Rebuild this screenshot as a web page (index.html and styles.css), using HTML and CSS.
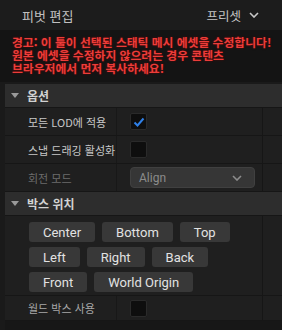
FILE: index.html
```html
<!DOCTYPE html>
<html lang="ko">
<head>
    <meta charset="UTF-8">
    <title>피벗 편집</title>
    <link rel="stylesheet" href="styles.css">
</head>
<body>

    <div class="titlebar">
        <span class="title">피벗 편집</span>
        <span class="preset">프리셋
            <svg class="chevron" width="10" height="6" viewBox="0 0 10 6"><path d="M1 1l4 4 4-4" fill="none" stroke="#c8c8c8" stroke-width="1.6"/></svg>
        </span>
    </div>

    <div class="warning">
        <div>경고: 이 툴이 선택된 스태틱 메시 에셋을 수정합니다!</div>
        <div>원본 에셋을 수정하지 않으려는 경우 콘텐츠</div>
        <div>브라우저에서 먼저 복사하세요!</div>
    </div>

    <div class="details">
        <!-- 옵션 -->
        <div class="section-header"><span class="arrow"></span>옵션</div>

        <div class="row">
            <div class="label">모든 LOD에 적용</div>
            <div class="value"><span class="checkbox checked">
                <svg width="12" height="10" viewBox="0 0 12 10"><path d="M1.5 5.5l3 3 6-7" fill="none" stroke="#2f80e8" stroke-width="2"/></svg>
            </span></div>
            <div class="reset"></div>
        </div>
        <div class="row">
            <div class="label">스냅 드래깅 활성화</div>
            <div class="value"><span class="checkbox"></span></div>
            <div class="reset"></div>
        </div>
        <div class="row">
            <div class="label disabled">회전 모드</div>
            <div class="value">
                <div class="combo">Align
                    <svg width="10" height="6" viewBox="0 0 10 6"><path d="M1 1l4 4 4-4" fill="none" stroke="#8c8c8c" stroke-width="1.6"/></svg>
                </div>
            </div>
            <div class="reset"></div>
        </div>

        <!-- 박스 위치 -->
        <div class="section-header"><span class="arrow"></span>박스 위치</div>

        <div class="button-area">
            <div class="buttons">
                <div class="button-row">
                    <button>Center</button>
                    <button>Bottom</button>
                    <button>Top</button>
                </div>
                <div class="button-row">
                    <button>Left</button>
                    <button>Right</button>
                    <button>Back</button>
                </div>
                <div class="button-row">
                    <button>Front</button>
                    <button>World Origin</button>
                </div>
            </div>
            <div class="reset"></div>
        </div>

        <div class="row last">
            <div class="label dim">월드 박스 사용</div>
            <div class="value"><span class="checkbox"></span></div>
            <div class="reset"></div>
        </div>

        <div class="filler"></div>
    </div>

</body>
</html>
```

FILE: styles.css
```css
body {
    margin: 0;
    width: 282px;
    height: 330px;
    overflow: hidden;
    background-color: #161616;
    font-family: 'Noto Sans CJK KR', 'Roboto', sans-serif;
    font-size: 12px;
    color: #c8c8c8;
}

/* Title bar */
.titlebar {
    height: 30px;
    padding: 0 23px 0 22px;
    display: flex;
    align-items: center;
    justify-content: space-between;
    background-color: #1c1c1c;
}

.title {
    font-size: 13px;
    color: #c0c0c0;
}

.preset {
    display: flex;
    align-items: center;
    gap: 8px;
    font-size: 12.5px;
    color: #c4c4c4;
}

/* Warning text */
.warning {
    height: 52px;
    box-sizing: border-box;
    padding: 5px 8px 0 12px;
    background-color: #141414;
    color: #ec3d3a;
    font-size: 11.8px;
    font-weight: bold;
    white-space: nowrap;
    text-shadow: 0 0 2px rgba(120, 0, 0, 0.9);
}

.warning div {
    height: 13px;
    line-height: 13px;
}

/* Details panel */
.details {
    padding-left: 5px;
    padding-top: 2px;
    background-color: #1a1a1a;
}

.section-header {
    height: 23px;
    display: flex;
    align-items: center;
    padding-left: 6px;
    background-color: #2d2d2d;
    font-weight: bold;
    color: #d2d2d2;
    border-bottom: 1px solid #161616;
}

.arrow {
    width: 0;
    height: 0;
    border-left: 4px solid transparent;
    border-right: 4px solid transparent;
    border-top: 5px solid #9a9a9a;
    margin-right: 8px;
}

.row {
    height: 27px;
    display: grid;
    grid-template-columns: 112px 145px 20px;
    background-color: #1f1f1f;
    border-bottom: 1px solid #161616;
}

.row > div {
    display: flex;
    align-items: center;
}

.label {
    padding-left: 23px;
    font-size: 11px;
    white-space: nowrap;
    border-right: 1px solid #181818;
}

.label.disabled {
    color: #6c6c6c;
}

.label.dim {
    color: #a8a8a8;
}

.value {
    padding-left: 13px;
}

.reset {
    border-left: 1px solid #161616;
}

.checkbox {
    width: 15px;
    height: 15px;
    border: 1px solid #2a2a2a;
    border-radius: 2px;
    background-color: #0e0e0e;
    display: flex;
    align-items: center;
    justify-content: center;
}

.combo {
    width: 125px;
    height: 21px;
    box-sizing: border-box;
    padding: 0 12px 0 8px;
    display: flex;
    align-items: center;
    justify-content: space-between;
    background-color: #363636;
    border: 1px solid #404040;
    border-radius: 4px;
    font-family: 'Roboto', sans-serif;
    color: #8c8c8c;
}

/* Box position buttons */
.button-area {
    display: grid;
    grid-template-columns: 257px 20px;
    background-color: #1f1f1f;
    border-bottom: 1px solid #161616;
}

.buttons {
    padding: 6px 0 3px 24px;
    display: flex;
    flex-direction: column;
    gap: 5px;
}

.button-row {
    display: flex;
    gap: 7px;
}

button {
    height: 20px;
    padding: 0 14px;
    border: none;
    border-radius: 3px;
    background-color: #383838;
    color: #e2e2e2;
    font-family: 'Roboto', sans-serif;
    font-size: 13px;
}

.row.last {
    height: 24px;
}

.filler {
    height: 20px;
    background-color: #171717;
}
```
